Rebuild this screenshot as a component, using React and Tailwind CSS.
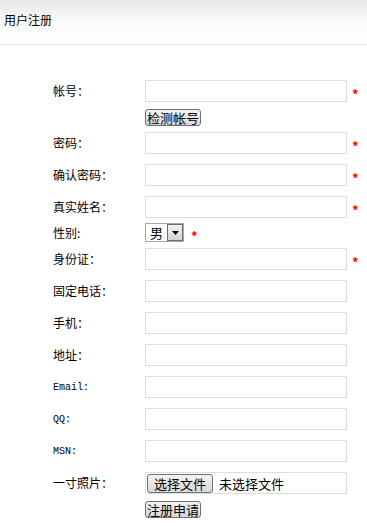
import React from 'react'

const cjk = { fontFamily: '"Noto Sans CJK SC", "Liberation Sans", sans-serif' }
const mono = { fontFamily: '"Liberation Mono", "Noto Sans CJK SC", monospace' }

function Star({ ml = 'ml-[5px]' }) {
  return <span className={`${ml} pt-[5px] text-[13px] font-bold leading-none text-[#ff0000]`}>*</span>
}

function Field({ label, required, ascii, mt = 'mt-[10px]' }) {
  return (
    <div className={`flex h-[22px] items-center ${mt}`}>
      <label
        className={`w-[92px] shrink-0 text-black ${ascii ? 'text-[10px]' : 'text-[12px]'}`}
        style={ascii ? mono : cjk}
      >
        {label}
      </label>
      <input className="h-[22px] w-[202px] border border-[#dddddd] bg-white px-1 text-[12px] outline-none" />
      {required && <Star />}
    </div>
  )
}

function OldButton({ children, className = '' }) {
  return (
    <button
      className={`flex h-[17px] items-center justify-center rounded-[3px] border border-[#707070] bg-gradient-to-b from-[#f4f4f4] to-[#d8d8d8] text-[13px] leading-none text-black ${className}`}
      style={cjk}
    >
      {children}
    </button>
  )
}

export default function App() {
  return (
    <div className="min-h-[526px] w-[367px] bg-white" style={cjk}>
      <div className="h-[45px] border-b border-[#e3e3e3] bg-gradient-to-b from-[#e6e6e6] via-[#fbfbfb] to-white px-[4px] pt-[6px]">
        <span className="text-[12px] text-black">用户注册</span>
      </div>

      <div className="pl-[53px] pt-[35px]">
        <Field label="帐号：" required mt="mt-0" />
        <div className="mt-[7px] pl-[92px]">
          <OldButton className="w-[56px]">检测帐号</OldButton>
        </div>
        <Field label="密码：" required mt="mt-[6px]" />
        <Field label="确认密码：" required />
        <Field label="真实姓名：" required />

        <div className="mt-[5px] flex h-[19px] items-center">
          <label className="w-[92px] shrink-0 text-[12px] text-black">性别:</label>
          <div className="flex h-[19px] w-[39px] items-stretch border border-[#a8a8a8] bg-white">
            <span className="flex flex-1 items-center justify-center text-[13px] leading-none text-black">男</span>
            <span className="flex w-[16px] items-center justify-center border border-[#6f6f6f] bg-gradient-to-b from-[#f2f2f2] to-[#d4d4d4]">
              <svg width="7" height="4" viewBox="0 0 7 4">
                <path d="M0 0h7L3.5 4z" fill="#000" />
              </svg>
            </span>
          </div>
          <Star ml="ml-[7px]" />
        </div>

        <Field label="身份证：" required mt="mt-[6px]" />
        <Field label="固定电话：" />
        <Field label="手机：" />
        <Field label="地址：" />
        <Field label="Email:" ascii />
        <Field label="QQ:" ascii />
        <Field label="MSN:" ascii />

        <div className="mt-[10px] flex h-[22px] items-center">
          <label className="w-[92px] shrink-0 text-[12px] text-black">一寸照片：</label>
          <div className="flex h-[22px] w-[202px] items-center border border-[#dddddd] bg-white pl-[1px]">
            <OldButton className="h-[19px] w-[66px] rounded-[2px] border-[#7a7a7a]">选择文件</OldButton>
            <span className="ml-[6px] text-[13px] leading-none text-black">未选择文件</span>
          </div>
        </div>

        <div className="mt-[7px] pl-[92px]">
          <OldButton className="w-[56px]">注册申请</OldButton>
        </div>
      </div>
    </div>
  )
}
